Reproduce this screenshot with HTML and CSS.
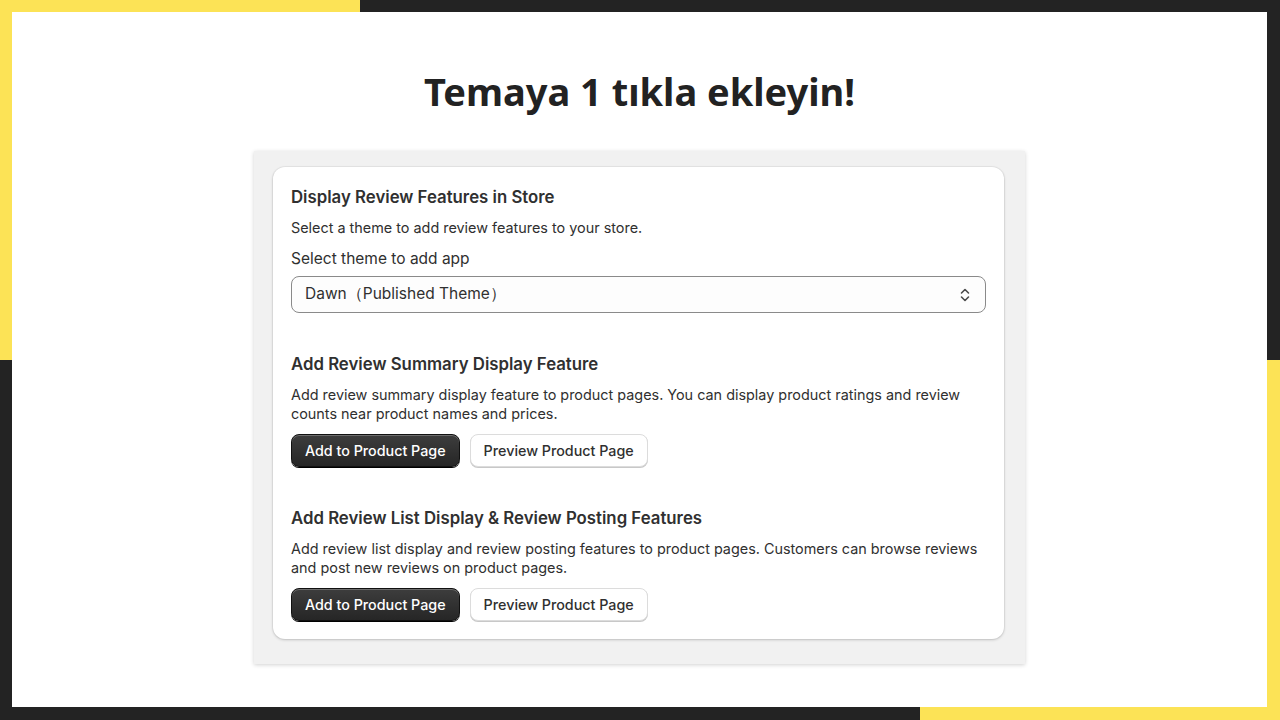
FILE: index.html
```html
<!DOCTYPE html>
<html lang="tr">

<head>
    <meta charset="UTF-8">
    <meta name="viewport" content="width=device-width, initial-scale=1.0">
    <title>Temaya 1 tıkla ekleyin!</title>
    <link rel="stylesheet" href="styles.css">
</head>

<body>
    <main class="panel">
        <h1 class="title">Temaya 1 tıkla ekleyin!</h1>

        <div class="frame">
            <section class="card">
                <h2 class="card-heading">Display Review Features in Store</h2>
                <p class="card-text">Select a theme to add review features to your store.</p>
                <label class="field-label" for="theme">Select theme to add app</label>
                <div class="select">
                    <span id="theme">Dawn（Published Theme）</span>
                    <svg class="select-icon" width="12" height="16" viewBox="0 0 12 16">
                        <path d="M2.5 6 L6 2.5 L9.5 6" fill="none" stroke="#4a4a4a" stroke-width="1.6" stroke-linecap="round" stroke-linejoin="round" />
                        <path d="M2.5 10 L6 13.5 L9.5 10" fill="none" stroke="#4a4a4a" stroke-width="1.6" stroke-linecap="round" stroke-linejoin="round" />
                    </svg>
                </div>

                <div class="feature">
                    <h2 class="card-heading">Add Review Summary Display Feature</h2>
                    <p class="card-text">Add review summary display feature to product pages. You can display product ratings and review counts near product names and prices.</p>
                    <div class="actions">
                        <button class="btn btn-primary">Add to Product Page</button>
                        <button class="btn btn-secondary">Preview Product Page</button>
                    </div>
                </div>

                <div class="feature">
                    <h2 class="card-heading">Add Review List Display &amp; Review Posting Features</h2>
                    <p class="card-text">Add review list display and review posting features to product pages. Customers can browse reviews and post new reviews on product pages.</p>
                    <div class="actions">
                        <button class="btn btn-primary">Add to Product Page</button>
                        <button class="btn btn-secondary">Preview Product Page</button>
                    </div>
                </div>
            </section>
        </div>
    </main>
</body>

</html>
```

FILE: styles.css
```css
* {
    box-sizing: border-box;
}

html,
body {
    height: 100%;
}

body {
    margin: 0;
    padding: 12px 13px 13px 12px;
    background-color: #232323;
    background-image:
        linear-gradient(#fce356, #fce356),
        linear-gradient(#fce356, #fce356);
    background-size: 360px 360px, 360px 360px;
    background-position: left top, right bottom;
    background-repeat: no-repeat;
    font-family: Inter, "Liberation Sans", sans-serif;
    color: #303030;
}

.panel {
    height: 100%;
    background: #fff;
    display: flex;
    flex-direction: column;
    align-items: center;
    padding-top: 59px;
}

.title {
    margin: 0;
    font-family: "Source Sans Pro", "Noto Sans", sans-serif;
    font-size: 38px;
    line-height: 40px;
    font-weight: 700;
    color: #222;
}

.frame {
    margin-top: 40px;
    width: 771px;
    background: #f1f1f1;
    padding: 16px 21px 25px 19px;
    box-shadow: 0 1px 4px rgba(0, 0, 0, 0.18);
}

.card {
    background: #fff;
    border-radius: 12px;
    padding: 20px 18px 18px;
    box-shadow: 0 1px 3px rgba(0, 0, 0, 0.18), 0 0 0 1px rgba(0, 0, 0, 0.04);
}

.card-heading {
    margin: 0;
    font-size: 16.8px;
    line-height: 20px;
    font-weight: 600;
}

.card-text {
    margin: 11px 0 0;
    font-size: 14.4px;
    line-height: 19px;
}

.field-label {
    display: block;
    margin-top: 12px;
    font-size: 15.5px;
    line-height: 20px;
}

.select {
    margin-top: 7px;
    height: 37px;
    border: 1px solid #8a8a8a;
    border-radius: 8px;
    background: #fdfdfd;
    display: flex;
    align-items: center;
    justify-content: space-between;
    padding: 0 14px 0 13px;
    font-size: 15.5px;
}

.feature {
    margin-top: 41px;
}

.actions {
    margin-top: 11px;
    display: flex;
    gap: 10px;
}

.btn {
    height: 33px;
    padding: 0 13px;
    border-radius: 8px;
    font-family: inherit;
    font-size: 14.3px;
    font-weight: 500;
    cursor: pointer;
}

.btn-primary {
    background: linear-gradient(#3d3d3d, #262626);
    color: #fff;
    border: 1px solid #111;
    box-shadow: inset 0 1px 0 rgba(255, 255, 255, 0.25), 0 1px 0 #000;
}

.btn-secondary {
    background: #fff;
    color: #303030;
    border: 1px solid #dcdcdc;
    box-shadow: 0 1px 0 #c8c8c8;
}
```
